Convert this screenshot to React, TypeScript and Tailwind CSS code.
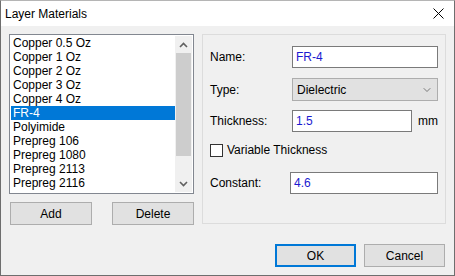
import { ChevronDown } from "lucide-react";

const materials = [
  "Copper 0.5 Oz",
  "Copper 1 Oz",
  "Copper 2 Oz",
  "Copper 3 Oz",
  "Copper 4 Oz",
  "FR-4",
  "Polyimide",
  "Prepreg 106",
  "Prepreg 1080",
  "Prepreg 2113",
  "Prepreg 2116",
];

const font = { fontFamily: '"Liberation Sans", Arial, sans-serif' };

const App = () => {
  return (
    <div
      className="w-[455px] h-[276px] flex flex-col bg-[#f0f0f0] border border-[#6e6e6e] border-t-[#b5b5b5] text-[12px] text-black overflow-hidden"
      style={font}
    >
      {/* title bar */}
      <div className="h-[25px] bg-white flex items-center justify-between pl-[4px] pr-[10px] shrink-0">
        <span className="text-[12px] leading-none">Layer Materials</span>
        <svg width="11" height="11" viewBox="0 0 11 11">
          <path d="M0.5 0.5 L10.5 10.5 M10.5 0.5 L0.5 10.5" stroke="#000" strokeWidth="1" />
        </svg>
      </div>

      <div className="flex pl-[8px] pt-[8px] gap-[8px]">
        {/* left column */}
        <div className="w-[185px] flex flex-col">
          <div className="h-[160px] border border-[#828790] bg-white flex p-[1px]">
            <div className="flex-1 flex flex-col">
              {materials.map((m) => (
                <div
                  key={m}
                  className={
                    m === "FR-4"
                      ? "h-[14px] leading-[14px] pl-[2px] bg-[#0078d7] text-white"
                      : "h-[14px] leading-[14px] pl-[2px]"
                  }
                >
                  {m}
                </div>
              ))}
            </div>
            <div className="w-[17px] bg-[#f0f0f0] flex flex-col items-center">
              <div className="h-[17px] flex items-center justify-center">
                <svg width="9" height="6" viewBox="0 0 9 6">
                  <path d="M1 5 L4.5 1.5 L8 5" stroke="#606060" strokeWidth="1.6" fill="none" />
                </svg>
              </div>
              <div className="w-[15px] h-[103px] bg-[#cdcdcd]" />
              <div className="flex-1" />
              <div className="h-[17px] flex items-center justify-center">
                <svg width="9" height="6" viewBox="0 0 9 6">
                  <path d="M1 1 L4.5 4.5 L8 1" stroke="#606060" strokeWidth="1.6" fill="none" />
                </svg>
              </div>
            </div>
          </div>
          <div className="flex justify-between pl-[1px] mt-[8px]">
            <button className="w-[82px] h-[23px] bg-[#e1e1e1] border border-[#adadad]">Add</button>
            <button className="w-[82px] h-[23px] bg-[#e1e1e1] border border-[#adadad]">Delete</button>
          </div>
        </div>

        {/* properties group */}
        <div className="w-[244px] h-[190px] border border-[#dcdcdc] flex flex-col pl-[7px] pr-[7px]">
          <div className="flex items-center h-[22px] mt-[11px]">
            <span className="w-[82px]">Name:</span>
            <div className="flex-1 h-[22px] bg-white border border-[#7a7a7a] pl-[3px] flex items-center text-[#1a1ad0]">
              FR-4
            </div>
          </div>
          <div className="flex items-center h-[23px] mt-[10px]">
            <span className="w-[82px]">Type:</span>
            <div className="flex-1 h-[23px] bg-[#e1e1e1] border border-[#adadad] pl-[4px] pr-[4px] flex items-center justify-between">
              <span>Dielectric</span>
              <ChevronDown size={12} strokeWidth={1.5} color="#555" />
            </div>
          </div>
          <div className="flex items-center h-[22px] mt-[9px]">
            <span className="w-[82px]">Thickness:</span>
            <div className="w-[120px] h-[22px] bg-white border border-[#7a7a7a] pl-[3px] flex items-center text-[#1a1ad0]">
              1.5
            </div>
            <span className="ml-[6px]">mm</span>
          </div>
          <div className="flex items-center h-[20px] mt-[8px]">
            <div className="w-[13px] h-[13px] bg-white border border-[#333]" />
            <span className="ml-[4px]">Variable Thickness</span>
          </div>
          <div className="flex items-center h-[22px] mt-[12px]">
            <span className="w-[80px]">Constant:</span>
            <div className="flex-1 h-[22px] bg-white border border-[#7a7a7a] pl-[3px] flex items-center text-[#1a1ad0]">
              4.6
            </div>
          </div>
        </div>
      </div>

      <div className="flex justify-end gap-[8px] pr-[9px] mt-[19px]">
        <button className="w-[81px] h-[23px] bg-[#e1e1e1] border-2 border-[#0078d7]">OK</button>
        <button className="w-[81px] h-[23px] bg-[#e1e1e1] border border-[#adadad]">Cancel</button>
      </div>
    </div>
  );
};

export default App;
